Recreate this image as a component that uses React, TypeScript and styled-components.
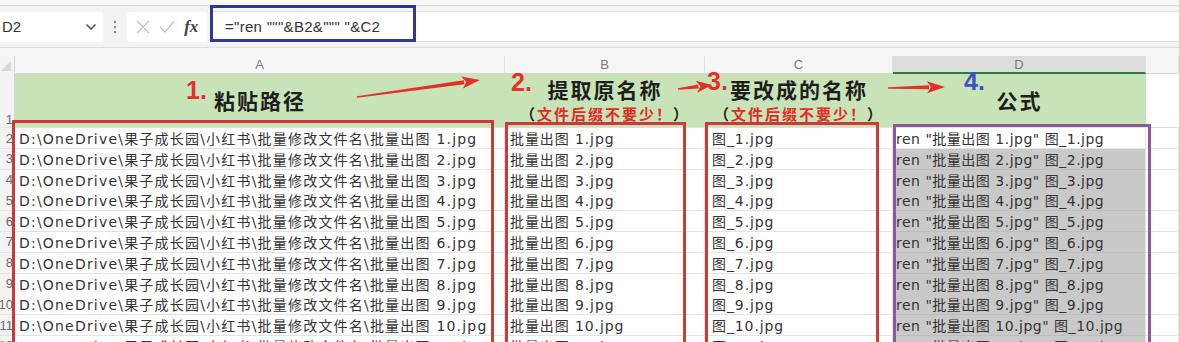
import React from "react";
import styled, { createGlobalStyle } from "styled-components";

const Global = createGlobalStyle`
  html, body { margin: 0; padding: 0; background: #fff; }
  body { font-family: "Liberation Sans", "Noto Sans CJK SC", sans-serif; }
`;

const COLS = "15px 490px 200px 188px 253px 1fr";
const ROW_H = 20.8;

const Page = styled.div`
  position: relative;
  width: 1179px;
  height: 342px;
  overflow: hidden;
  background: #fff;
`;

const TopStrip = styled.div`
  height: 5px;
  background: #fafafa;
  border-bottom: 1px solid #d9d9d9;
`;

const FormulaRow = styled.div`
  height: 41px;
  display: flex;
  align-items: center;
  background: #f3f3f3;
  border-bottom: 1px solid #dedede;
`;

const NameBox = styled.div`
  width: 103px;
  height: 30px;
  box-sizing: border-box;
  background: #fff;
  border-radius: 0 4px 4px 0;
  display: flex;
  align-items: center;
  justify-content: space-between;
  padding: 0 6px 0 2px;
  font-size: 15px;
  color: #333;
`;

const Sep = styled.div`
  width: 24px;
  display: flex;
  justify-content: center;
`;

const FxBox = styled.div`
  width: 80px;
  height: 30px;
  background: #fff;
  border-radius: 4px;
  display: flex;
  align-items: center;
  justify-content: space-around;
  padding: 0 4px;
  box-sizing: border-box;
`;

const FxText = styled.span`
  font-family: "Liberation Serif", serif;
  font-style: italic;
  font-weight: bold;
  font-size: 17px;
  color: #444;
`;

const FormulaField = styled.div`
  position: relative;
  flex: 1;
  height: 29px;
  margin-left: 5px;
  background: #fff;
  border-top: 1px solid #e2e2e2;
  border-bottom: 1px solid #e2e2e2;
  display: flex;
  align-items: center;
  padding-left: 13px;
  font-size: 15px;
  letter-spacing: 0.3px;
  color: #333;
`;

const FormulaHighlight = styled.div`
  position: absolute;
  left: -2px;
  top: -7px;
  width: 206px;
  height: 37px;
  border: 3px solid #2f3a8f;
  box-sizing: border-box;
`;

const Gap = styled.div`
  height: 8px;
  background: #f5f5f5;
`;

const Row = styled.div<{ $h: number }>`
  display: grid;
  grid-template-columns: ${COLS};
  height: ${(p) => p.$h}px;
`;

const Corner = styled.div`
  background: #f3f3f3;
  border-right: 1px solid #d4d4d4;
  position: relative;
`;

const ColLetter = styled.div<{ $active?: boolean }>`
  background: ${(p) => (p.$active ? "#dcdcdc" : "#f5f5f5")};
  border-bottom: ${(p) => (p.$active ? "2px solid #2f7a3c" : "1px solid #d6d6d6")};
  border-right: 1px solid #e0e0e0;
  display: flex;
  align-items: center;
  justify-content: center;
  font-size: 13px;
  color: #7a7a7a;
  box-sizing: border-box;
`;

const RowNum = styled.div<{ $bottom?: boolean }>`
  background: #f3f3f3;
  border-right: 1px solid #d4d4d4;
  border-bottom: 1px solid #e4e4e4;
  display: flex;
  justify-content: flex-end;
  align-items: ${(p) => (p.$bottom ? "flex-end" : "center")};
  overflow: hidden;
  font-size: 13px;
  color: #6a6a6a;
  padding-right: 1px;
  box-sizing: border-box;
  white-space: nowrap;
`;

const HeadCell = styled.div<{ $green?: boolean }>`
  background: ${(p) => (p.$green ? "#c9e3b9" : "#fff")};
  display: flex;
  flex-direction: column;
  align-items: center;
  justify-content: center;
  gap: 3px;
  padding-top: 2px;
  border-bottom: 1px solid #d8e6cf;
`;

const Title = styled.div`
  font-size: 21px;
  font-weight: bold;
  letter-spacing: 2px;
  color: #1e1e1e;
  line-height: 24px;
`;

const Sub = styled.div`
  font-size: 15px;
  font-weight: bold;
  letter-spacing: 2px;
  line-height: 18px;
  color: #222;
  span { color: #e52a22; }
`;

const Cell = styled.div<{ $sel?: boolean; $pad: number; $front?: boolean; $ls?: number }>`
  background: ${(p) => (p.$sel ? "#c9c9c9" : "#fff")};
  border-bottom: 1px solid ${(p) => (p.$sel ? "#bdbdbd" : "#e3e3e3")};
  border-right: 1px solid #e3e3e3;
  box-sizing: border-box;
  display: flex;
  align-items: center;
  padding-left: ${(p) => p.$pad}px;
  font-family: "DejaVu Sans", "Noto Sans CJK SC", sans-serif;
  font-size: 14px;
  letter-spacing: ${(p) => p.$ls ?? 1.2}px;
  color: #333;
  white-space: nowrap;
  overflow: visible;
  position: relative;
  z-index: ${(p) => (p.$front ? 1 : 0)};
`;

const Box = styled.div<{ $c: string }>`
  position: absolute;
  border: 3px solid ${(p) => p.$c};
  box-sizing: border-box;
  pointer-events: none;
  z-index: 5;
`;

const Num = styled.div<{ $c: string }>`
  position: absolute;
  font-size: 25px;
  font-weight: bold;
  color: ${(p) => p.$c};
  line-height: 1;
  z-index: 6;
`;

const ArrowLayer = styled.svg`
  position: absolute;
  left: 0;
  top: 0;
  z-index: 6;
`;

function Arrow({ x1, y1, x2, y2 }: { x1: number; y1: number; x2: number; y2: number }) {
  const L = Math.hypot(x2 - x1, y2 - y1);
  const a = (Math.atan2(y2 - y1, x2 - x1) * 180) / Math.PI;
  const hl = Math.min(16, L * 0.4);
  return (
    <g transform={`translate(${x1} ${y1}) rotate(${a})`} fill="#e3302b">
      <polygon points={`0,-0.8 ${L - hl},-2 ${L - hl},2 0,0.8`} />
      <polygon points={`${L - hl - 2},-6 ${L},0 ${L - hl - 2},6 ${L - hl + 2},0`} />
    </g>
  );
}

const rows = Array.from({ length: 11 }, (_, i) => i + 1);

export default function App() {
  return (
    <Page>
      <Global />
      <TopStrip />
      <FormulaRow>
        <NameBox>
          <span>D2</span>
          <svg width="12" height="8" viewBox="0 0 12 8">
            <path d="M1.5 1.5 L6 6 L10.5 1.5" stroke="#555" strokeWidth="1.6" fill="none" />
          </svg>
        </NameBox>
        <Sep>
          <svg width="4" height="14" viewBox="0 0 4 14">
            <circle cx="2" cy="2" r="1.2" fill="#888" />
            <circle cx="2" cy="7" r="1.2" fill="#888" />
            <circle cx="2" cy="12" r="1.2" fill="#888" />
          </svg>
        </Sep>
        <FxBox>
          <svg width="14" height="14" viewBox="0 0 14 14">
            <path d="M1 1 L13 13 M13 1 L1 13" stroke="#c4c4c4" strokeWidth="1.4" />
          </svg>
          <svg width="16" height="14" viewBox="0 0 16 14">
            <path d="M1 7 L6 12 L15 1.5" stroke="#c4c4c4" strokeWidth="1.4" fill="none" />
          </svg>
          <FxText>fx</FxText>
        </FxBox>
        <FormulaField>
          <FormulaHighlight />
          ="ren """&amp;B2&amp;""" "&amp;C2
        </FormulaField>
      </FormulaRow>
      <Gap />
      <Row $h={18}>
        <Corner>
          <svg width="10" height="10" viewBox="0 0 10 10" style={{ position: "absolute", right: 3, bottom: 3 }}>
            <polygon points="10,0 10,10 0,10" fill="#d8d8d8" />
          </svg>
        </Corner>
        <ColLetter>A</ColLetter>
        <ColLetter>B</ColLetter>
        <ColLetter>C</ColLetter>
        <ColLetter $active>D</ColLetter>
        <ColLetter />
      </Row>
      <Row $h={54}>
        <RowNum $bottom>1</RowNum>
        <HeadCell $green>
          <Title>粘贴路径</Title>
        </HeadCell>
        <HeadCell $green>
          <Title>提取原名称</Title>
          <Sub>
            （<span>文件后缀不要少！</span>）
          </Sub>
        </HeadCell>
        <HeadCell $green>
          <Title>要改成的名称</Title>
          <Sub>
            （<span>文件后缀不要少！</span>）
          </Sub>
        </HeadCell>
        <HeadCell $green>
          <Title>公式</Title>
        </HeadCell>
        <HeadCell />
      </Row>
      {rows.map((n) => (
        <Row $h={ROW_H} key={n}>
          <RowNum>{n + 1}</RowNum>
          <Cell $pad={4} $front>D:\OneDrive\果子成长园\小红书\批量修改文件名\批量出图 {n}.jpg</Cell>
          <Cell $pad={5} $ls={0.9}>批量出图 {n}.jpg</Cell>
          <Cell $pad={7} $ls={0.9}>图_{n}.jpg</Cell>
          <Cell $pad={3} $ls={0.5} $sel={n > 1}>
            ren "批量出图 {n}.jpg" 图_{n}.jpg
          </Cell>
          <Cell $pad={4} />
        </Row>
      ))}

      <Box $c="#c93a3c" style={{ left: 12, top: 120, width: 482, height: 260 }} />
      <Box $c="#c93a3c" style={{ left: 505, top: 122, width: 181, height: 260 }} />
      <Box $c="#c93a3c" style={{ left: 705, top: 122, width: 174, height: 260 }} />
      <Box $c="#8c5a9c" style={{ left: 893, top: 124, width: 258, height: 260 }} />

      <Num $c="#e3302b" style={{ left: 186, top: 78 }}>1.</Num>
      <Num $c="#e3302b" style={{ left: 511, top: 70 }}>2.</Num>
      <Num $c="#e3302b" style={{ left: 707, top: 69 }}>3.</Num>
      <Num $c="#3c4fc4" style={{ left: 964, top: 69 }}>4.</Num>

      <ArrowLayer width="1179" height="342">
        <Arrow x1={357} y1={97} x2={480} y2={80} />
        <Arrow x1={678} y1={89} x2={712} y2={85} />
        <Arrow x1={888} y1={88} x2={945} y2={87} />
      </ArrowLayer>
    </Page>
  );
}
